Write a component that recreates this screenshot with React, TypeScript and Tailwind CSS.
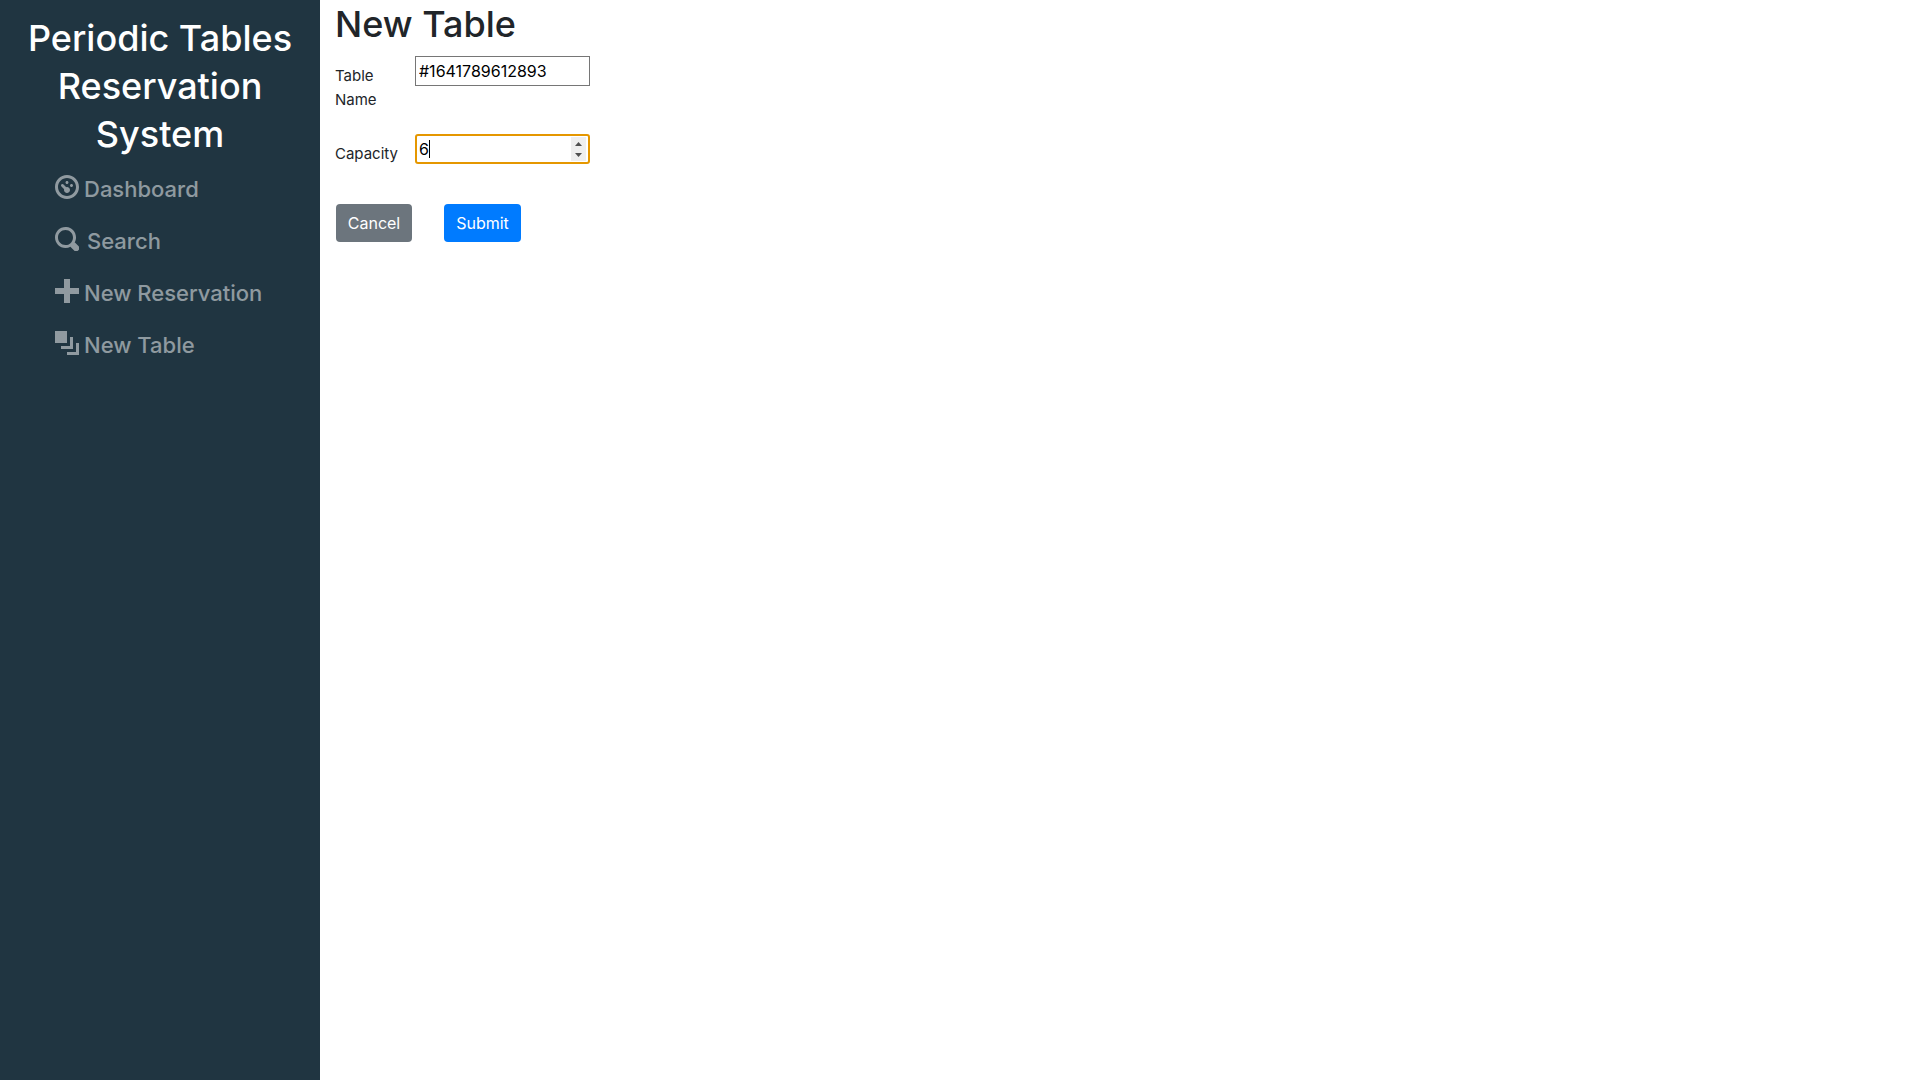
import { useState } from "react";

const icons = {
  dial: "M4 0c-2.2 0-4 1.8-4 4s1.8 4 4 4 4-1.8 4-4-1.8-4-4-4zm0 1c1.66 0 3 1.34 3 3s-1.34 3-3 3-3-1.34-3-3 1.34-3 3-3zm0 1c-.28 0-.5.22-.5.5s.22.5.5.5.5-.22.5-.5-.22-.5-.5-.5zm-1.66 1a.5.5 0 0 0-.19.84l.91.91c-.02.08-.06.16-.06.25 0 .55.45 1 1 1s1-.45 1-1-.45-1-1-1c-.09 0-.17.04-.25.06l-.91-.91a.5.5 0 0 0-.44-.16.5.5 0 0 0-.06 0zm3.16 0c-.28 0-.5.22-.5.5s.22.5.5.5.5-.22.5-.5-.22-.5-.5-.5z",
  search:
    "M3.5 0c-1.93 0-3.5 1.57-3.5 3.5s1.57 3.5 3.5 3.5c.59 0 1.17-.14 1.66-.41a1 1 0 0 0 .13.13l1 1a1.02 1.02 0 1 0 1.44-1.44l-1-1a1 1 0 0 0-.16-.13c.27-.49.44-1.06.44-1.66 0-1.93-1.55-3.5-3.5-3.5zm0 1c1.39 0 2.5 1.11 2.5 2.5 0 .66-.24 1.27-.66 1.72-.01.01-.02.02-.03.03a1 1 0 0 0-.13.13c-.44.4-1.04.63-1.69.63-1.39 0-2.5-1.11-2.5-2.5s1.11-2.5 2.5-2.5z",
  plus: "M3 0v3h-3v2h3v3h2v-3h3v-2h-3v-3h-2z",
  layers: "M0 0v4h4v-4h-4zm5 2v3h-3v1h4v-4h-1zm2 2v3h-3v1h4v-4h-1z",
};

const links = [
  { label: "Dashboard", icon: icons.dial, gap: "gap-[5px]" },
  { label: "Search", icon: icons.search, gap: "gap-2" },
  { label: "New Reservation", icon: icons.plus, gap: "gap-[5px]" },
  { label: "New Table", icon: icons.layers, gap: "gap-[5px]" },
];

function Sidebar() {
  return (
    <aside className="w-1/6 shrink-0 bg-[#203541] pt-3.5">
      <h2 className="px-4 text-center text-[36px] leading-12 font-medium text-white">
        Periodic Tables Reservation System
      </h2>
      <nav className="mt-[5px] pl-[55px]">
        <ul>
          {links.map((link) => (
            <li key={link.label}>
              <a
                href="#"
                className={`flex items-start py-2 text-[22px] leading-9 font-medium whitespace-nowrap text-white/50 ${link.gap}`}
              >
                <svg viewBox="0 0 8 8" className="mt-1 size-6 shrink-0 fill-current" aria-hidden="true">
                  <path d={link.icon} />
                </svg>
                {link.label}
              </a>
            </li>
          ))}
        </ul>
      </nav>
    </aside>
  );
}

function TableForm() {
  const [name, setName] = useState("#1641789612893");
  const [capacity, setCapacity] = useState("6");
  const step = (amount: number) => setCapacity(String(Math.max(1, Number(capacity) + amount)));

  return (
    <form className="text-base leading-6" onSubmit={(e) => e.preventDefault()}>
      <div className="grid grid-cols-[64px_175px] items-start gap-x-4 gap-y-[22px]">
        <label htmlFor="table_name" className="pt-2 text-[15px] leading-6">
          Table Name
        </label>
        <input
          id="table_name"
          value={name}
          onChange={(e) => setName(e.target.value)}
          className="h-[30px] w-full border border-[#767676] bg-white px-[3px] text-black outline-none"
        />
        <label htmlFor="capacity" className="pt-2 text-[15px] leading-6">
          Capacity
        </label>
        <div className="relative h-[30px]">
          <input
            id="capacity"
            type="number"
            value={capacity}
            onChange={(e) => setCapacity(e.target.value)}
            className="size-full appearance-none rounded-[3px] border-2 border-[#e59700] bg-white px-[2px] text-black caret-transparent outline-none [appearance:textfield]"
          />
          <span className="pointer-events-none absolute top-1.5 left-3.5 h-[18px] w-px bg-black" />
          <div className="absolute top-[3px] right-1 flex h-6 w-[15px] flex-col bg-[#efefef] text-[#505050]">
            <button type="button" aria-label="Increase" onClick={() => step(1)} className="flex flex-1 items-end justify-center pb-[3px]">
              <svg viewBox="0 0 7 4" className="h-1 w-[7px] fill-current">
                <path d="M0 4 3.5 0 7 4z" />
              </svg>
            </button>
            <button type="button" aria-label="Decrease" onClick={() => step(-1)} className="flex flex-1 items-start justify-center pt-1">
              <svg viewBox="0 0 7 4" className="h-1 w-[7px] fill-current">
                <path d="M0 0h7L3.5 4z" />
              </svg>
            </button>
          </div>
        </div>
      </div>
      <div className="mt-[38px] flex gap-8 pl-px text-white">
        <button type="button" className="h-[38px] w-[76px] rounded bg-[#6c757d]">
          Cancel
        </button>
        <button type="submit" className="h-[38px] w-[77px] rounded bg-[#007bff]">
          Submit
        </button>
      </div>
    </form>
  );
}

export default function App() {
  return (
    <div className="flex min-h-screen bg-white font-['Inter',sans-serif] text-[#212529]">
      <Sidebar />
      <main className="flex-1 px-[15px]">
        <h1 className="mb-2 text-[36px] leading-12 font-medium">New Table</h1>
        <TableForm />
      </main>
    </div>
  );
}
